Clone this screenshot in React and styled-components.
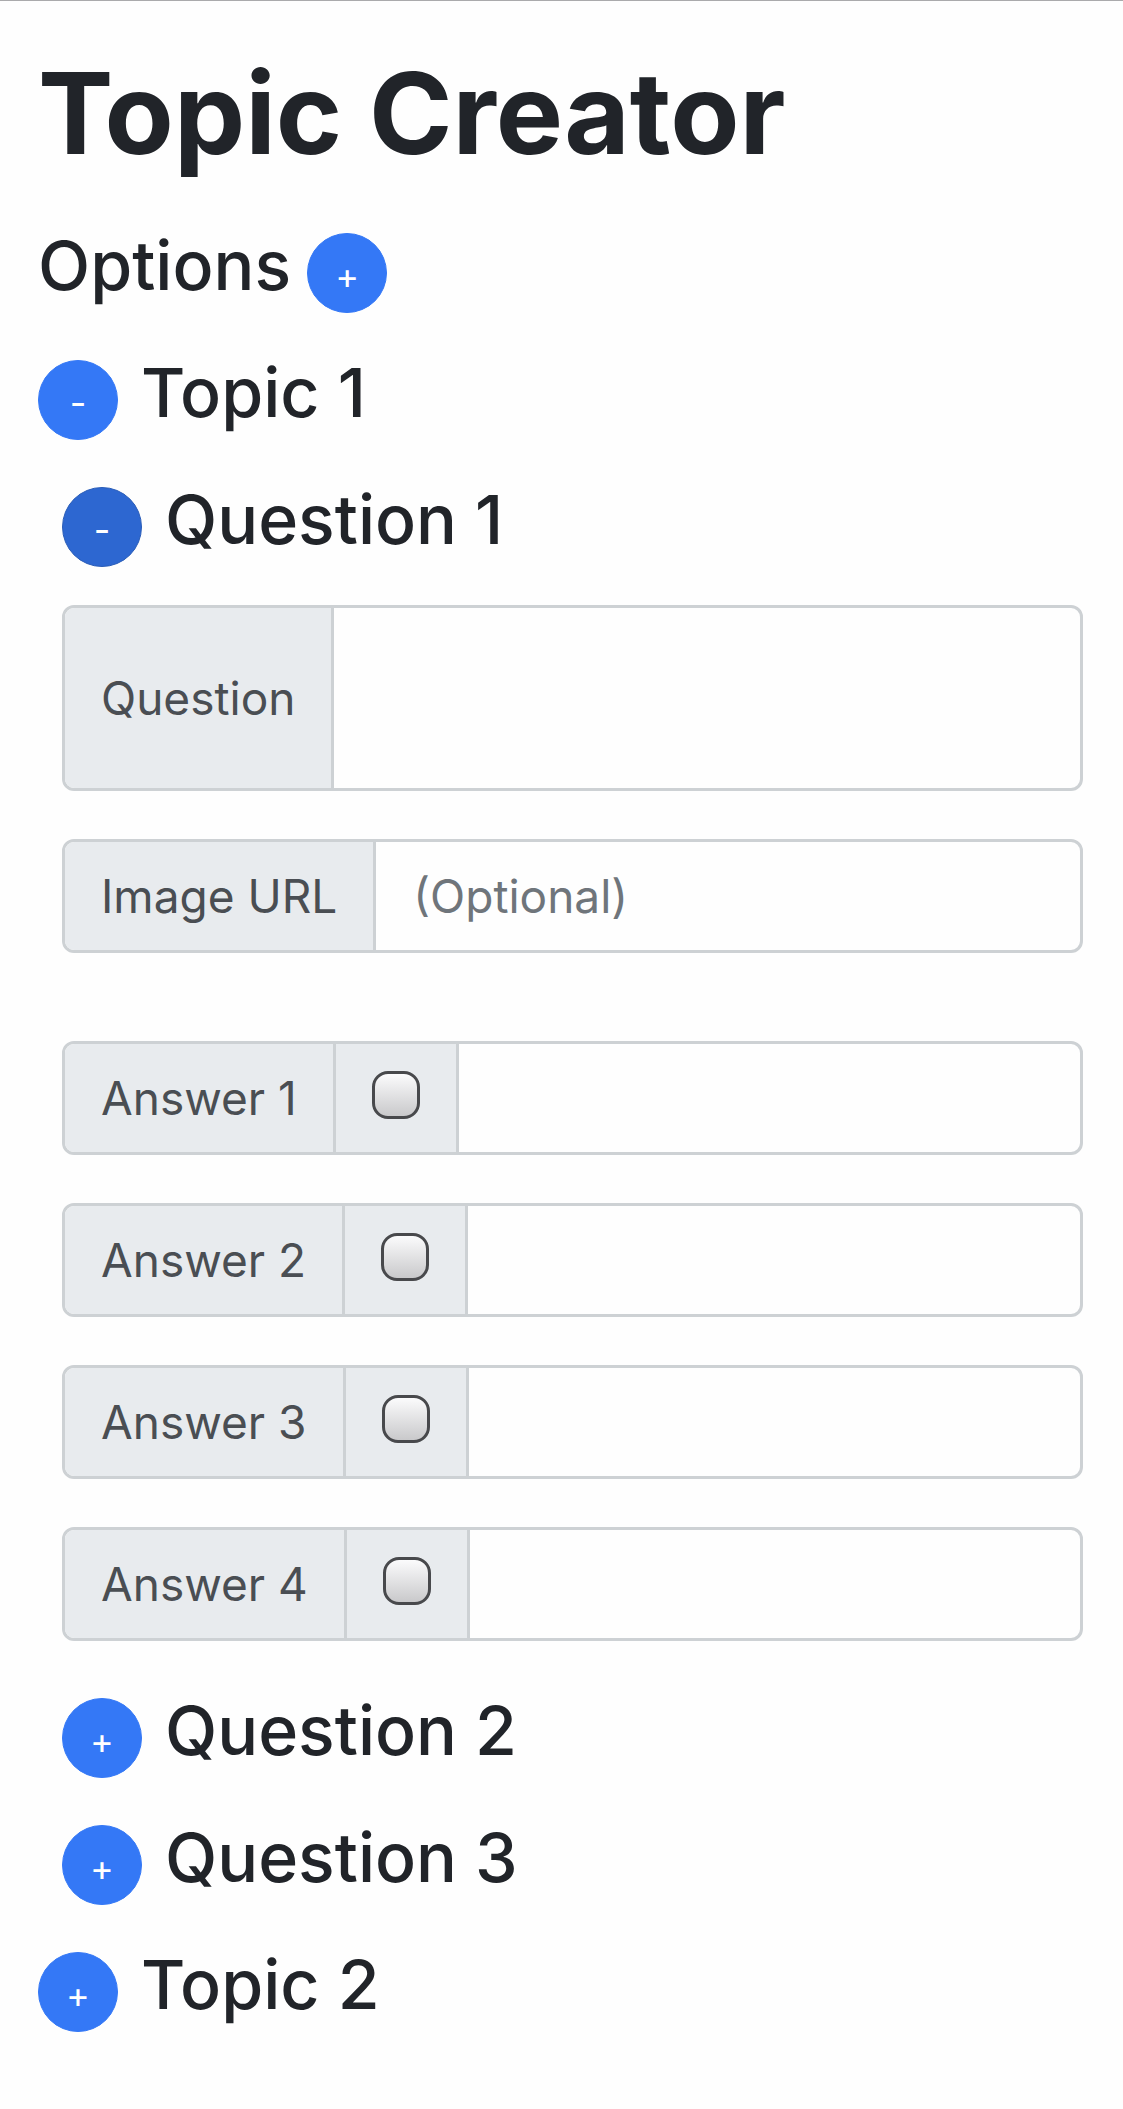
import React, { useState } from "react";
import styled, { createGlobalStyle } from "styled-components";

const GlobalStyle = createGlobalStyle`
  *, *::before, *::after { box-sizing: border-box; }
  body {
    margin: 0;
    background: #fefefe;
    color: #212429;
    font-family: Inter, "Liberation Sans", sans-serif;
  }
`;

const Page = styled.main`
  border-top: 1px solid #aaaaac;
  padding: 42px 40px 40px 38px;
`;

const Title = styled.h1`
  margin: 0 0 40px;
  font-size: 113px;
  line-height: 140px;
  font-weight: 700;
`;

const HeadingRow = styled.div`
  display: flex;
  align-items: flex-end;
  gap: ${(p) => (p.$tight ? "16px" : "23px")};
  margin-bottom: 37px;
`;

const Heading = styled.h2`
  margin: 0;
  padding-bottom: 6px;
  font-size: 68px;
  line-height: 84px;
  font-weight: 500;
`;

const RoundButton = styled.button`
  flex: none;
  display: flex;
  align-items: center;
  justify-content: center;
  width: 80px;
  height: 80px;
  padding: 6px 0 0;
  border: 1px solid ${(p) => (p.$active ? "#2a5db8" : "#3478f6")};
  border-radius: 50%;
  background: ${(p) => (p.$active ? "#2d67d1" : "#3478f6")};
  color: #fff;
  font-family: inherit;
  font-size: 36px;
  line-height: 40px;
  font-weight: 400;
`;

const Indent = styled.section`
  padding-left: 24px;
`;

const Fields = styled.div`
  display: flex;
  flex-direction: column;
  gap: 48px;
  margin: 38px 0 47px;
`;

const Answers = styled.div`
  display: flex;
  flex-direction: column;
  gap: 48px;
  margin-top: 40px;
`;

const Group = styled.div`
  display: flex;
  align-items: stretch;
  height: ${(p) => (p.$tall ? "186px" : "114px")};
  border: 3px solid #cdd1d4;
  border-radius: 12px;
  overflow: hidden;
  background: #fefefe;
`;

const Label = styled.label`
  display: flex;
  align-items: center;
  padding: 0 36px;
  border-right: 3px solid #cdd1d4;
  background: #e8ebee;
  color: #4a4e53;
  font-size: 46px;
  white-space: nowrap;
`;

const CheckCell = styled.div`
  display: flex;
  align-items: center;
  padding: 0 36px 6px;
  border-right: 3px solid #cdd1d4;
  background: #e8ebee;
`;

const Checkbox = styled.input`
  appearance: none;
  width: 48px;
  height: 48px;
  margin: 0;
  border: 3px solid #48494c;
  border-radius: 16px;
  background: linear-gradient(#fbfbfc, #c9c9cb);

  &:checked {
    background: #3478f6;
  }
`;

const fieldStyles = `
  flex: 1;
  min-width: 0;
  margin: 0;
  padding: 0 37px;
  border: 0;
  outline: 0;
  background: transparent;
  color: #4a4e53;
  font-family: inherit;
  font-size: 46px;
`;

const TextInput = styled.input`
  ${fieldStyles}
  &::placeholder {
    color: #6f757b;
    opacity: 1;
  }
`;

const TextArea = styled.textarea`
  ${fieldStyles}
  padding: 18px 37px;
  resize: none;
`;

function Toggle({ label, open, active }) {
  const [expanded, setExpanded] = useState(open);
  return (
    <HeadingRow>
      <RoundButton
        type="button"
        $active={active}
        aria-label={`Toggle ${label}`}
        aria-expanded={expanded}
        onClick={() => setExpanded(!expanded)}
      >
        {expanded ? "-" : "+"}
      </RoundButton>
      <Heading>{label}</Heading>
    </HeadingRow>
  );
}

function Answer({ number }) {
  const id = `answer-${number}`;
  return (
    <Group>
      <Label htmlFor={id}>Answer {number}</Label>
      <CheckCell>
        <Checkbox type="checkbox" aria-label={`Answer ${number} is correct`} />
      </CheckCell>
      <TextInput id={id} type="text" />
    </Group>
  );
}

export default function App() {
  return (
    <>
      <GlobalStyle />
      <Page>
        <Title>Topic Creator</Title>
        <HeadingRow $tight>
          <Heading>Options</Heading>
          <RoundButton type="button" aria-label="Show options">+</RoundButton>
        </HeadingRow>
        <Toggle label="Topic 1" open />
        <Indent>
          <Toggle label="Question 1" open active />
          <Fields>
            <Group $tall>
              <Label htmlFor="question">Question</Label>
              <TextArea id="question" />
            </Group>
            <Group>
              <Label htmlFor="image-url">Image URL</Label>
              <TextInput id="image-url" type="text" placeholder="(Optional)" />
            </Group>
            <Answers>
              {[1, 2, 3, 4].map((n) => (
                <Answer key={n} number={n} />
              ))}
            </Answers>
          </Fields>
          <Toggle label="Question 2" open={false} />
          <Toggle label="Question 3" open={false} />
        </Indent>
        <Toggle label="Topic 2" open={false} />
      </Page>
    </>
  );
}
